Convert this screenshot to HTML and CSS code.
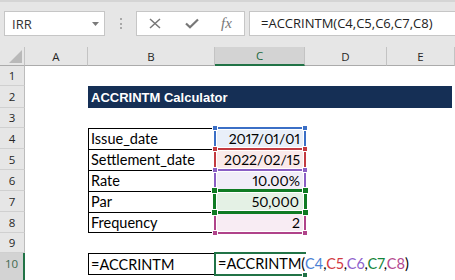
FILE: index.html
```html
<!DOCTYPE html>
<html>
<head>
<meta charset="utf-8">
<link rel="stylesheet" href="styles.css">
</head>
<body>
<div class="toolbar">
  <div class="namebox"><span>IRR</span><svg class="arrow" width="7" height="4" viewBox="0 0 7 4"><polygon points="0,0 7,0 3.5,4" fill="#7a7a7a"/></svg></div>
  <div class="grip"><i></i><i></i><i></i></div>
  <div class="fbtns">
    <svg class="ic-x" width="12" height="11" viewBox="0 0 12 11"><path d="M1 1 L11 10 M11 1 L1 10" stroke="#777" stroke-width="1.5" fill="none"/></svg>
    <svg class="ic-ok" width="14" height="11" viewBox="0 0 14 11"><path d="M1 5.5 L5 9.3 L13 1.5" stroke="#777" stroke-width="2.2" fill="none"/></svg>
    <span class="fx">fx</span>
  </div>
  <div class="formula">=ACCRINTM(C4,C5,C6,C7,C8)</div>
</div>
<div class="sheet">
  <div class="ch corner"><svg width="25" height="19" viewBox="0 0 25 19"><polygon points="9,16 22,16 22,3" fill="#b9b9b9"/></svg></div>
  <div class="ch">A</div>
  <div class="ch">B</div>
  <div class="ch sel">C</div>
  <div class="ch">D</div>
  <div class="ch">E</div>

  <div class="rh g2">1</div>
  <div class="rh g3">2</div>
  <div class="rh g4">3</div>
  <div class="rh g5">4</div>
  <div class="rh g6">5</div>
  <div class="rh g7">6</div>
  <div class="rh g8">7</div>
  <div class="rh g9">8</div>
  <div class="rh g10">9</div>
  <div class="rh g11 sel">10</div>

  <div class="title g3">ACCRINTM Calculator</div>

  <div class="lb g5">Issue_date</div>
  <div class="lb g6">Settlement_date</div>
  <div class="lb g7">Rate</div>
  <div class="lb g8">Par</div>
  <div class="lb g9 last">Frequency</div>

  <div class="rc c4 g5"><i class="h tl"></i><i class="h tr"></i><i class="h bl"></i><i class="h br"></i>2017/01/01</div>
  <div class="rc c5 g6"><i class="h tl"></i><i class="h tr"></i><i class="h bl"></i><i class="h br"></i>2022/02/15</div>
  <div class="rc c6 g7"><i class="h tl"></i><i class="h tr"></i><i class="h bl"></i><i class="h br"></i>10.00%</div>
  <div class="rc c7 g8"><i class="h tl"></i><i class="h tr"></i><i class="h bl"></i><i class="h br"></i>50,000</div>
  <div class="rc c8 g9"><i class="h tl"></i><i class="h tr"></i><i class="h bl"></i><i class="h br"></i>2</div>

  <div class="b10 g11">=ACCRINTM</div>
  <div class="act g11"><span>=ACCRINTM(<b class="k4">C4</b>,<b class="k5">C5</b>,<b class="k6">C6</b>,<b class="k7">C7</b>,<b class="k8">C8</b>)</span><span class="caret"></span><i class="fh"></i></div>
</div>
</body>
</html>
```
FILE: styles.css
```css
* { box-sizing: border-box; }
body {
  margin: 0;
  width: 455px;
  height: 280px;
  overflow: hidden;
  background: #fff;
  font-family: "Open Sans", sans-serif;
}

/* formula bar */
.toolbar {
  height: 47px;
  background: #e6e6e6;
  border-top: 2px solid #d5d5d5;
  padding-top: 9px;
  display: flex;
  align-items: flex-start;
}
.namebox {
  margin-left: 4px;
  width: 101px;
  height: 25px;
  background: #fff;
  border: 1px solid #c6c6c6;
  display: flex;
  align-items: center;
  justify-content: space-between;
  padding: 0 5px 0 7px;
  font-size: 13px;
  color: #333;
}
.grip {
  width: 31px;
  height: 25px;
  display: flex;
  flex-direction: column;
  align-items: center;
  justify-content: center;
  gap: 2.5px;
}
.grip i {
  width: 2px;
  height: 2px;
  background: #a8a8a8;
}
.fbtns {
  width: 109px;
  height: 25px;
  background: #fff;
  border: 1px solid #c6c6c6;
  display: flex;
  align-items: center;
  padding-left: 12px;
}
.ic-ok { margin-left: 24px; }
.fx {
  margin-left: 22px;
  font-family: "Liberation Serif", serif;
  font-style: italic;
  font-size: 15px;
  color: #777;
  line-height: 1;
}
.formula {
  margin-left: 4px;
  flex: 1;
  height: 25px;
  background: #fff;
  border: 1px solid #c6c6c6;
  border-right: none;
  padding-left: 11px;
  font-size: 13px;
  line-height: 23px;
  color: #222;
  white-space: nowrap;
}

/* sheet grid */
.sheet {
  display: grid;
  grid-template-columns: 25px 63px 127px 90px 82px 68px;
  grid-template-rows: 19px 20px 22px 20px 21px 21px 21px 21px 21px 20px 27px;
}
.ch {
  grid-row: 1;
  background: #e6e6e6;
  border-right: 1px solid #c3c3c3;
  border-bottom: 1px solid #ababab;
  font-size: 11.5px;
  color: #262626;
  display: flex;
  align-items: center;
  justify-content: center;
}
.ch.corner { display: block; }
.ch.sel {
  background: #d3d3d3;
  border-bottom: 2px solid #217346;
  color: #1d6a40;
}
.rh {
  grid-column: 1;
  background: #e6e6e6;
  border-right: 1px solid #bcbcbc;
  border-bottom: 1px solid #d0d0d0;
  font-size: 11.5px;
  color: #262626;
  display: flex;
  align-items: center;
  justify-content: center;
}
.rh.sel {
  background: #d3d3d3;
  border-right: 2px solid #217346;
  border-bottom: none;
  color: #3f6a50;
  align-items: flex-start;
  padding-top: 3px;
}

.g2 { grid-row: 2; }
.g3 { grid-row: 3; }
.g4 { grid-row: 4; }
.g5 { grid-row: 5; }
.g6 { grid-row: 6; }
.g7 { grid-row: 7; }
.g8 { grid-row: 8; }
.g9 { grid-row: 9; }
.g10 { grid-row: 10; }
.g11 { grid-row: 11; }

.title {
  grid-column: 3 / 7;
  margin-right: 3px;
  background: #152f55;
  color: #fff;
  font-family: "Liberation Sans", Arial, sans-serif;
  font-weight: bold;
  font-size: 13px;
  line-height: 15px;
  display: flex;
  align-items: flex-end;
  padding: 0 0 3px 3px;
}

.lb {
  grid-column: 3;
  border-left: 1px solid #000;
  border-top: 1px solid #000;
  font-family: Lato, sans-serif;
  font-size: 14.5px;
  line-height: 18px;
  color: #000;
  display: flex;
  align-items: flex-end;
  padding: 0 0 1px 2px;
}
.lb.last { border-bottom: 1px solid #000; padding-bottom: 0; }

.rc {
  grid-column: 4;
  position: relative;
  margin: -1px;
  border: 2px solid var(--c);
  background: var(--f);
  box-shadow: inset 0 0 0 1px #fff;
  font-family: Lato, sans-serif;
  font-size: 14px;
  font-variant-numeric: proportional-nums;
  line-height: 18px;
  color: #000;
  display: flex;
  justify-content: flex-end;
  align-items: flex-end;
  padding-right: 4px;
}
.c4 { --c: #3b6fc6; --f: #e9eff9; z-index: 1; }
.c5 { --c: #c33a40; --f: #faeaea; z-index: 2; }
.c6 { --c: #8a5ec4; --f: #f1edf8; z-index: 3; }
.c8 { --c: #b0438a; --f: #f8ecf3; z-index: 4; }
.c7 { --c: #0f7b23; --f: #e4f1e5; z-index: 5; margin: -2px; border-width: 3px; padding-right: 5px; }

.h {
  position: absolute;
  width: 6px;
  height: 6px;
  background: var(--c);
  border: 1px solid #fff;
}
.tl { left: -4px; top: -4px; }
.tr { right: -4px; top: -4px; }
.bl { left: -4px; bottom: -4px; }
.br { right: -4px; bottom: -4px; }
.c7 .h { width: 7px; height: 7px; }
.c7 .tl { left: -5px; top: -5px; }
.c7 .tr { right: -5px; top: -5px; }
.c7 .bl { left: -5px; bottom: -5px; }
.c7 .br { right: -5px; bottom: -5px; }

.b10 {
  grid-column: 3;
  align-self: start;
  height: 22px;
  border: 1px solid #000;
  border-right: none;
  font-family: Lato, sans-serif;
  font-size: 14.5px;
  line-height: 18px;
  color: #000;
  display: flex;
  align-items: flex-end;
  padding: 0 0 0 2px;
}
.act {
  grid-column: 4;
  align-self: start;
  position: relative;
  z-index: 10;
  height: 24px;
  margin: -1px;
  border: 2px solid #217346;
  border-right: none;
  font-family: Lato, sans-serif;
  font-size: 14.5px;
  font-variant-numeric: proportional-nums;
  line-height: 18px;
  color: #000;
  white-space: nowrap;
  display: flex;
  align-items: flex-end;
  padding: 0 0 1px 2px;
}
.act b { font-weight: normal; }
.k4 { color: #4a7fd4; }
.k5 { color: #d2393f; }
.k6 { color: #8e60cc; }
.k7 { color: #13853a; }
.k8 { color: #b4488e; }
.caret {
  width: 2px;
  height: 19px;
  background: #111;
  margin-left: 2px;
  align-self: center;
}
.fh {
  position: absolute;
  right: -2px;
  bottom: -4px;
  width: 6px;
  height: 6px;
  background: #217346;
  border: 1px solid #fff;
}
```
